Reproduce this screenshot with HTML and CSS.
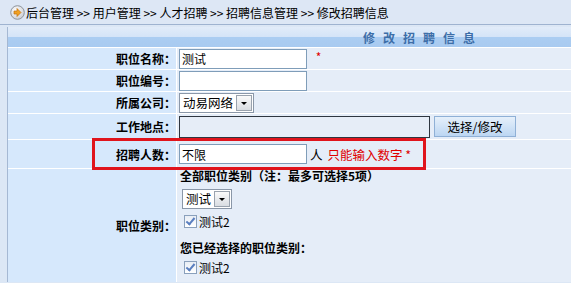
FILE: index.html
```html
<!DOCTYPE html>
<html lang="zh-CN">
<head>
  <meta charset="UTF-8">
  <title>修改招聘信息</title>
  <link rel="stylesheet" href="styles.css">
</head>
<body>
  <div class="crumbs">
    <svg class="crumb-icon" width="15" height="15" viewBox="0 0 15 15">
      <defs>
        <radialGradient id="ball" cx="40%" cy="35%" r="70%">
          <stop offset="0" stop-color="#ffffff"/>
          <stop offset="1" stop-color="#c9ccd2"/>
        </radialGradient>
      </defs>
      <circle cx="7.5" cy="7.5" r="6.8" fill="url(#ball)" stroke="#8e949c" stroke-width="1"/>
      <path d="M4 6 H7 V3.5 L11 7.5 L7 11.5 V9 H4 Z" fill="#f0a020" stroke="#c07010" stroke-width="0.7"/>
    </svg>
    <span>后台管理 &gt;&gt; 用户管理 &gt;&gt; 人才招聘 &gt;&gt; 招聘信息管理 &gt;&gt; 修改招聘信息</span>
  </div>

  <div class="panel">
    <table class="form">
      <tr>
        <th colspan="2" class="title">修改招聘信息</th>
      </tr>
      <tr class="r1">
        <td class="label">职位名称：</td>
        <td class="value"><input class="txt" value="测试"> <span class="req">*</span></td>
      </tr>
      <tr class="r1">
        <td class="label">职位编号：</td>
        <td class="value"><input class="txt" value=""></td>
      </tr>
      <tr class="r1">
        <td class="label">所属公司：</td>
        <td class="value">
          <span class="dropdown"><span class="dd-text">动易网络</span><span class="dd-btn"></span></span>
        </td>
      </tr>
      <tr class="r4">
        <td class="label">工作地点：</td>
        <td class="value">
          <div class="line">
            <input class="txt wide" value="" readonly>
            <button class="btn">选择/修改</button>
          </div>
        </td>
      </tr>
      <tr class="r5">
        <td class="label">招聘人数：</td>
        <td class="value">
          <div class="line">
            <input class="txt" value="不限"><span class="unit">人</span><span class="hint">只能输入数字 *</span>
          </div>
        </td>
      </tr>
      <tr class="r6">
        <td class="label">职位类别：</td>
        <td class="value">
          <div class="sub">全部职位类别（注：最多可选择5项）</div>
          <div class="sel-row"><span class="dropdown"><span class="dd-text">测试</span><span class="dd-btn"></span></span></div>
          <div class="chk-row"><span class="chk"></span>测试2</div>
          <div class="sub second">您已经选择的职位类别：</div>
          <div class="chk-row"><span class="chk"></span>测试2</div>
        </td>
      </tr>
    </table>
    <div class="mark"></div>
  </div>
</body>
</html>
```

FILE: styles.css
```css
html, body { overflow: hidden; }
body {
  margin: 0;
  background: #dce7f5;
  font-family: "Noto Sans CJK SC", "DejaVu Sans", sans-serif;
  font-size: 12px;
  color: #000;
}
.crumbs {
  height: 24px;
  display: flex;
  align-items: center;
  gap: 1px;
  padding-left: 10px;
  background: #dde7f5;
  border-bottom: 1px solid #9fb3d0;
  font-size: 12px;
  white-space: nowrap;
}
.crumb-icon { flex: none; }
.panel {
  position: relative;
  margin: 2px 0 0 7px;
  border-left: 1px solid #a5b8d3;
}
.form {
  border-collapse: collapse;
  width: 100%;
}
.form td {
  border-top: 1px solid #ffffff;
  padding: 0;
  vertical-align: middle;
}
.title {
  height: 20px;
  padding: 0 0 0 267px;
  background: linear-gradient(#e2ecf9 0, #d4e4f8 50%, #abcdf2 52%, #a8caf0 100%);
  color: #3d6ea8;
  font-weight: bold;
  font-size: 12px;
  letter-spacing: 8px;
  text-align: center;
}
.label {
  width: 168px;
  background: #d6e8fc;
  text-align: right;
  font-weight: bold;
  border-right: 1px solid #ffffff;
  white-space: nowrap;
}
.value {
  background: #e5edf8;
  padding-left: 2px !important;
}
.r1 td { height: 21px; }
.r4 td { height: 25px; }
.r5 td { height: 28px; }
.r6 td { height: 113px; vertical-align: top; }
.r6 .label { vertical-align: middle; }
.txt {
  box-sizing: border-box;
  width: 128px;
  height: 20px;
  margin: 0;
  padding: 1px 2px;
  border: 1px solid #7f9db9;
  background: #fff;
  font: 12px "Noto Sans CJK SC", sans-serif;
  vertical-align: middle;
}
.txt.wide {
  width: 251px;
  height: 22px;
  background: #e6edf7;
  border: 1px solid #2e3640;
}
.req { color: #e00000; margin-left: 6px; }
.line {
  display: flex;
  align-items: center;
}
.btn {
  margin-left: 4px;
  width: 82px;
  height: 21px;
  padding: 0;
  border: 1px solid #8fb0d6;
  background: linear-gradient(#e6f0fb, #bcd6f2);
  font: 12.5px "Noto Sans CJK SC", sans-serif;
  color: #000;
}
.unit { margin-left: 3px; font-size: 12.5px; }
.hint { margin-left: 5px; color: #e00000; font-size: 12.5px; }
.dropdown {
  display: inline-flex;
  align-items: center;
  height: 18px;
  border: 1px solid #8a97a8;
  background: #fff;
  vertical-align: middle;
}
.dd-text { padding: 0 3px; font-size: 12.5px; line-height: 18px; }
.dd-btn {
  position: relative;
  width: 14px;
  height: 14px;
  margin-right: 1px;
  border: 1px solid #9aa3ae;
  background: linear-gradient(#fafafa, #d9dde2);
}
.dd-btn::after {
  content: "";
  position: absolute;
  left: 4px;
  top: 6px;
  border-left: 3px solid transparent;
  border-right: 3px solid transparent;
  border-top: 3px solid #000;
}
.sub {
  font-weight: bold;
  height: 14px;
  line-height: 14px;
  padding-left: 1px;
}
.sub.second { margin-top: 6px; height: 16px; line-height: 16px; }
.sel-row { padding: 5px 0 1px 3px; }
.chk-row {
  display: flex;
  align-items: center;
  height: 24px;
  padding-left: 5px;
  font-size: 12px;
}
.chk {
  position: relative;
  width: 11px;
  height: 11px;
  margin-right: 2px;
  border: 1px solid #8aa0bc;
  background: linear-gradient(#e9eef5, #ffffff);
}
.chk::after {
  content: "";
  position: absolute;
  left: 3px;
  top: 0;
  width: 3px;
  height: 7px;
  border-right: 2px solid #5a7fc0;
  border-bottom: 2px solid #5a7fc0;
  transform: rotate(40deg);
}
.mark {
  position: absolute;
  left: 84px;
  top: 111px;
  width: 328px;
  height: 26px;
  border: 3px solid #e0141c;
}
```
